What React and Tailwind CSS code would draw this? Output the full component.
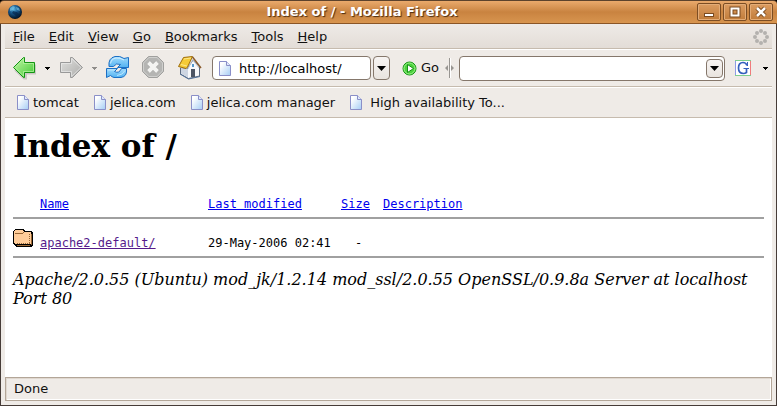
import React from "react";

const MENUS = ["File", "Edit", "View", "Go", "Bookmarks", "Tools", "Help"];
const BOOKMARKS = [
  { label: "tomcat", gap: "gap-1" },
  { label: "jelica.com", gap: "gap-1" },
  { label: "jelica.com manager", gap: "gap-1" },
  { label: "High availability To...", gap: "gap-2" },
];

function GlobeIcon() {
  return (
    <svg width="16" height="16" viewBox="0 0 16 16" aria-hidden="true">
      <defs>
        <radialGradient id="globe" cx="0.4" cy="0.3" r="0.7">
          <stop offset="0" stopColor="#5ab4e0" />
          <stop offset="0.45" stopColor="#16568c" />
          <stop offset="1" stopColor="#03101f" />
        </radialGradient>
      </defs>
      <circle cx="8" cy="8" r="7" fill="url(#globe)" />
      <path d="M3 4l3-2 2 1-2 3-3 1zM9 3l3 1 1 3-3-1z" fill="#7cc8e8" opacity="0.6" />
      <path d="M6 7l4 1 3 3-3 3-2-3-3-2z" fill="#062447" opacity="0.7" />
    </svg>
  );
}

function ArrowLeft() {
  return (
    <svg width="24" height="24" viewBox="0 0 24 24" aria-hidden="true">
      <defs>
        <linearGradient id="green" x1="0" y1="0" x2="1" y2="1">
          <stop offset="0" stopColor="#c4f7a8" />
          <stop offset="1" stopColor="#3fc832" />
        </linearGradient>
      </defs>
      <path d="M3 14l9 8.500h2v-5h9v-9" fill="none" stroke="#000" strokeOpacity="0.15" strokeWidth="2" />
      <path d="M1.500 11.500L11.500 1.500H12.500V6.500H22.500V16.500H12.500V21.500H11.500Z" fill="url(#green)" stroke="#149414" />
      <path d="M3 11.500L11.500 3V7.500H21.500V15.500H11.500V20Z" fill="none" stroke="#b8f5a4" strokeOpacity="0.7" />
    </svg>
  );
}

function ArrowRight() {
  return (
    <svg width="24" height="24" viewBox="0 0 24 24" aria-hidden="true">
      <defs>
        <linearGradient id="gray" x1="0" y1="0" x2="1" y2="1">
          <stop offset="0" stopColor="#e0e0de" />
          <stop offset="1" stopColor="#acacaa" />
        </linearGradient>
      </defs>
      <path d="M22.500 11.500L12.500 1.500H10.500V6.500H0.500V16.500H10.500V21.500H12.500Z" fill="url(#gray)" stroke="#999" />
      <path d="M21 11.500L11.500 2.500V7.500H1.500V15.500H11.500V20.500Z" fill="none" stroke="#eee" strokeOpacity="0.6" />
    </svg>
  );
}

function ReloadIcon() {
  return (
    <svg width="24" height="24" viewBox="0 0 24 24" aria-hidden="true">
      <defs>
        <linearGradient id="blue" x1="0" y1="0" x2="0" y2="1">
          <stop offset="0" stopColor="#a4dcfc" />
          <stop offset="1" stopColor="#52b2f2" />
        </linearGradient>
      </defs>
      <path d="M3 10.500Q2 2 9 0.500Q14 -0.500 18 2.500L22.500 1.500V11.500H11.500L14.500 8.500Q10 6.500 7.500 10.500Z" fill="url(#blue)" stroke="#1c6fc4" />
      <path d="M20.500 12.500Q21.500 20.500 15 21.500H8Q6 21 4.500 19.500L0.500 21.500V12.500H11.500L8.500 15.500Q13 18 15.500 12.500Z" fill="url(#blue)" stroke="#1c6fc4" />
      <path d="M4.500 7.500Q5.500 2.500 10 2Q14 1.500 18 4" fill="none" stroke="#d4f0ff" />
      <path d="M2 14h7M19 14.500Q17 19 11 19.500" fill="none" stroke="#bce7ff" />
    </svg>
  );
}

function StopIcon() {
  return (
    <svg width="24" height="24" viewBox="0 0 24 24" aria-hidden="true">
      <path d="M6.500 0.500H15.500L21.500 6.500V15.500L15.500 21.500H6.500L0.500 15.500V6.500Z" fill="#b5b5b3" stroke="#a0a09e" />
      <path d="M7 1.500H15L20.500 7V15L15 20.500H7L1.500 15V7Z" fill="none" stroke="#d0d0ce" />
      <path d="M6.500 6.500L15.500 15.500M15.500 6.500L6.500 15.500" stroke="#a2a2a0" strokeWidth="5" />
      <path d="M6.500 6.500L15.500 15.500M15.500 6.500L6.500 15.500" stroke="#f4f4f2" strokeWidth="4" />
    </svg>
  );
}

function HomeIcon() {
  return (
    <svg width="24" height="24" viewBox="0 0 24 24" aria-hidden="true">
      <path d="M2.500 12V18L10.500 22.500L21.500 20V11L15 4L9 13Z" fill="#f7f8fb" stroke="#5d6b80" />
      <path d="M3 12V17.500L10 21.500V13Z" fill="#cdd5e2" />
      <path d="M5.500 1.500L14.500 0.500L9.500 11L8 12.500L0.500 10.500Z" fill="#f5cb38" stroke="#9e6c0a" />
      <path d="M6 3L13 2M3 8.500L9 10" stroke="#fce889" />
      <path d="M14.500 1L23 12" stroke="#8a5a2c" strokeWidth="1.500" />
      <path d="M10 13L14.500 3.500L21 12" fill="none" stroke="#c5cad4" />
      <rect x="13" y="13" width="4" height="8" fill="#4c5464" />
      <rect x="14" y="8" width="2" height="3" fill="#5597cc" />
      <path d="M2 18L10.500 23L22 20.500" fill="none" stroke="#52719a" />
    </svg>
  );
}

function PageIcon() {
  return (
    <svg className="shrink-0" width="12" height="15" viewBox="0 0 12 15" aria-hidden="true">
      <defs>
        <linearGradient id="page" x1="0" y1="0" x2="1" y2="1">
          <stop offset="0.2" stopColor="#fff" />
          <stop offset="1" stopColor="#a5cdf5" />
        </linearGradient>
      </defs>
      <path d="M0.500 0.500H7.500L11.500 4.500V14.500H0.500Z" fill="url(#page)" stroke="#8a8fc8" />
      <path d="M7.500 0.500V4.500H11.500" fill="#dfe9fb" stroke="#8a8fc8" />
    </svg>
  );
}

function GoIcon() {
  return (
    <svg width="15" height="15" viewBox="0 0 15 15" aria-hidden="true">
      <circle cx="7.500" cy="7.500" r="6.500" fill="#4bd23c" stroke="#139413" />
      <circle cx="7.500" cy="7.500" r="5.500" fill="none" stroke="#9df08c" />
      <path d="M5.500 3.500L11.500 7.500L5.500 11.500Z" fill="#fff" stroke="#189018" />
    </svg>
  );
}

function Splitter() {
  return (
    <svg className="mr-1 ml-1.5 shrink-0" width="10" height="20" viewBox="0 0 10 20" aria-hidden="true">
      <path d="M4.500 0V20" stroke="#989591" />
      <path d="M5.500 0V20" stroke="#fff" />
      <path d="M3 7V13L0 10ZM6 7V13L9 10Z" fill="#989591" />
    </svg>
  );
}

function GoogleIcon() {
  return (
    <svg width="16" height="16" viewBox="0 0 16 16" aria-hidden="true">
      <rect width="16" height="16" fill="#fff" />
      <path d="M0 0.500H16M0 15.500H16" stroke="#7fcf8e" />
      <path d="M0.500 1V15" stroke="#8d9ce6" />
      <path d="M15.500 1V15" stroke="#f07b7b" />
      <path d="M12 5.500Q11 2.500 8 2.500Q3.500 2.500 3.500 8T8.500 13.500Q10 13.500 11.500 12.500V9" fill="none" stroke="#3560bd" strokeWidth="1.700" />
      <path d="M12.500 2V6M8.500 8.500H14" stroke="#3560bd" />
    </svg>
  );
}

function Throbber() {
  const dots = [[8, 2], [12, 4], [14, 8], [12, 12], [8, 14], [4, 12], [2, 8], [4, 4]];
  return (
    <svg width="16" height="16" viewBox="0 0 16 16" aria-hidden="true">
      {dots.map(([x, y]) => (
        <circle key={`${x}-${y}`} cx={x} cy={y} r="2" fill="#b4b1ae" />
      ))}
    </svg>
  );
}

function FolderIcon() {
  return (
    <svg width="20" height="19" viewBox="0 0 20 19" shapeRendering="crispEdges" aria-hidden="true">
      <path d="M2 1H10L12 3H18L20 5V17L18 19H3L1 17L0 15V3Z" fill="#000" />
      <path d="M2 2H9L11 4H18V16H2L1 14V3Z" fill="#ffcc99" />
      <path d="M2 5.500H9L11 4.500" fill="none" stroke="#996633" />
      <path d="M18.500 6V16.500M4 17.500H17" fill="none" stroke="#996633" />
      <path d="M4 15.500H17M16.500 6V15" fill="none" stroke="#996633" strokeDasharray="1 1" />
    </svg>
  );
}

function SmallArrow({ color }) {
  return (
    <svg width="5" height="3" viewBox="0 0 5 3" shapeRendering="crispEdges" aria-hidden="true">
      <path d="M0 0H5V1H4V2H3V3H2V2H1V1H0Z" fill={color} />
    </svg>
  );
}

function ComboArrow() {
  return (
    <svg width="9" height="5" viewBox="0 0 9 5" aria-hidden="true">
      <path d="M0 0H9L4.500 5Z" fill="#000" />
    </svg>
  );
}

function WindowButton({ label, children }) {
  return (
    <button
      type="button"
      aria-label={label}
      className="flex h-[18px] w-6 items-center justify-center rounded-xs border border-[#7c4d23] bg-linear-to-b from-[#dc9c60] to-[#c17c3a] shadow-[inset_0_0_0_1px_#e4ac77]"
    >
      <svg width="12" height="12" viewBox="0 0 12 12" aria-hidden="true">
        {children}
      </svg>
    </button>
  );
}

function TitleBar() {
  return (
    <div className="bg-black">
      <header className="flex h-6 items-center rounded-t-sm border-t border-b border-t-[#5c422c] border-b-[#8a5526] bg-linear-to-b from-[#eaaa6c] via-[#c98340] to-[#d8954f] pr-1 pl-[7px]">
        <GlobeIcon />
        <div className="flex-1 pl-1 text-center text-[13px] leading-5 font-bold text-white [text-shadow:1px_1px_1px_#4a2b10]">
          Index of / - Mozilla Firefox
        </div>
        <div className="flex gap-0.5">
          <WindowButton label="Minimize">
            <rect x="1.500" y="7.500" width="9" height="3" fill="#fff" stroke="#7a4a20" />
          </WindowButton>
          <WindowButton label="Maximize">
            <rect x="2.500" y="2.500" width="7" height="7" fill="none" stroke="#7a4a20" strokeWidth="4" />
            <rect x="2.500" y="2.500" width="7" height="7" fill="none" stroke="#fff" strokeWidth="2" />
          </WindowButton>
          <WindowButton label="Close">
            <path d="M2 2L10 10M10 2L2 10" stroke="#7a4a20" strokeWidth="4.500" />
            <path d="M2 2L10 10M10 2L2 10" stroke="#fff" strokeWidth="2.500" />
          </WindowButton>
        </div>
      </header>
    </div>
  );
}

function MenuBar() {
  return (
    <nav className="flex h-[25px] items-center gap-3.5 border-b border-[#c6bbae] bg-linear-to-b from-[#eeeae7] to-[#e3ddd7] pt-0.5 pr-[3px] pl-2">
      {MENUS.map((name) => (
        <button key={name} type="button" className="leading-5">
          <span className="underline decoration-1 underline-offset-1">{name[0]}</span>
          {name.slice(1)}
        </button>
      ))}
      <span className="ml-auto">
        <Throbber />
      </span>
    </nav>
  );
}

function NavBar() {
  return (
    <div className="flex h-[38px] items-center border-t border-b border-t-white border-b-[#c6bbae] pr-1 pl-[7px]">
      <button type="button" aria-label="Back">
        <ArrowLeft />
      </button>
      <button type="button" aria-label="Back history" className="ml-[9px]">
        <SmallArrow color="#000" />
      </button>
      <button type="button" aria-label="Forward" className="ml-2.5">
        <ArrowRight />
      </button>
      <button type="button" aria-label="Forward history" className="ml-2">
        <SmallArrow color="#8f8d8a" />
      </button>
      <div className="ml-[9px] flex gap-3">
        <button type="button" aria-label="Reload">
          <ReloadIcon />
        </button>
        <button type="button" aria-label="Stop">
          <StopIcon />
        </button>
        <button type="button" aria-label="Home">
          <HomeIcon />
        </button>
      </div>
      <div className="ml-2.5 flex h-6 w-[159px] items-center gap-2 rounded-sm border border-[#85776b] bg-white pl-1.5">
        <PageIcon />
        <input
          aria-label="Location"
          defaultValue="http://localhost/"
          className="h-5 min-w-0 flex-1 bg-transparent text-black outline-none"
        />
      </div>
      <button
        type="button"
        aria-label="Show history"
        className="ml-0.5 flex h-6 w-[17px] items-center justify-center rounded-sm border border-[#85776b] bg-linear-to-b from-[#f7f4f2] to-[#e9e4df]"
      >
        <ComboArrow />
      </button>
      <button type="button" className="ml-3 flex items-center gap-1">
        <GoIcon />
        Go
      </button>
      <Splitter />
      <div className="flex h-[25px] min-w-0 flex-1 items-center rounded-sm border border-[#85776b] bg-white pr-px pl-1.5">
        <input aria-label="Search" className="min-w-0 flex-1 bg-transparent outline-none" />
        <button
          type="button"
          aria-label="Search history"
          className="flex h-[19px] w-[17px] items-center justify-center rounded-sm border border-[#85776b] bg-linear-to-b from-[#f7f4f2] to-[#e9e4df]"
        >
          <ComboArrow />
        </button>
      </div>
      <button type="button" aria-label="Google" className="ml-2.5">
        <GoogleIcon />
      </button>
      <button type="button" aria-label="Choose search engine" className="ml-3">
        <SmallArrow color="#000" />
      </button>
    </div>
  );
}

function BookmarkBar() {
  return (
    <div className="flex h-[31px] items-center gap-[15px] border-t border-b border-t-white border-b-[#c6bbae] pl-3">
      {BOOKMARKS.map(({ label, gap }) => (
        <a key={label} href="#" className={`flex items-center ${gap}`}>
          <PageIcon />
          {label}
        </a>
      ))}
    </div>
  );
}

function DirectoryListing() {
  const rule = "border-b-2 border-[#a0a0a0]";
  const link = "text-[#0000ee] underline";
  return (
    <table className="w-full table-fixed border-collapse text-left font-['DejaVu_Sans_Mono','Liberation_Mono',monospace] text-[12px] leading-[14px]">
      <colgroup>
        <col className="w-[27px]" />
        <col className="w-[168px]" />
        <col className="w-[133px]" />
        <col className="w-[42px]" />
        <col />
      </colgroup>
      <thead>
        <tr className={`h-[21px] align-top ${rule}`}>
          <td></td>
          <th className="font-normal"><a href="#" className={link}>Name</a></th>
          <th className="font-normal"><a href="#" className={link}>Last modified</a></th>
          <th className="font-normal"><a href="#" className={link}>Size</a></th>
          <th className="font-normal"><a href="#" className={link}>Description</a></th>
        </tr>
      </thead>
      <tbody>
        <tr className={`h-[39px] align-bottom ${rule}`}>
          <td className="pb-[9px]"><FolderIcon /></td>
          <td className="pb-1.5"><a href="#" className="text-[#551a8b] underline">apache2-default/</a></td>
          <td className="pb-1.5">29-May-2006 02:41</td>
          <td className="pb-1.5 pl-3.5">-</td>
          <td></td>
        </tr>
      </tbody>
    </table>
  );
}

export default function App() {
  return (
    <div className="flex min-h-screen flex-col bg-[#efebe7] font-['DejaVu_Sans','Liberation_Sans',sans-serif] text-[13px] text-[#111]">
      <TitleBar />
      <div className="flex flex-1 flex-col border-x border-b border-[#463c38] px-1 pb-1">
        <MenuBar />
        <NavBar />
        <BookmarkBar />
        <main className="flex-1 bg-white px-2 pt-[9px] font-['DejaVu_Serif','Liberation_Serif',serif] text-[16px] leading-[19px] text-black">
          <h1 className="mb-8 text-[31px] leading-[38px] font-bold">Index of /</h1>
          <DirectoryListing />
          <address className="mt-3">
            Apache/2.0.55 (Ubuntu) mod_jk/1.2.14 mod_ssl/2.0.55 OpenSSL/0.9.8a Server at localhost Port 80
          </address>
        </main>
        <footer className="h-6 border border-[#b3a698] px-2 leading-[22px] shadow-[inset_1px_1px_0_#e0d8d0,inset_-1px_-1px_0_#fff]">
          Done
        </footer>
      </div>
    </div>
  );
}
